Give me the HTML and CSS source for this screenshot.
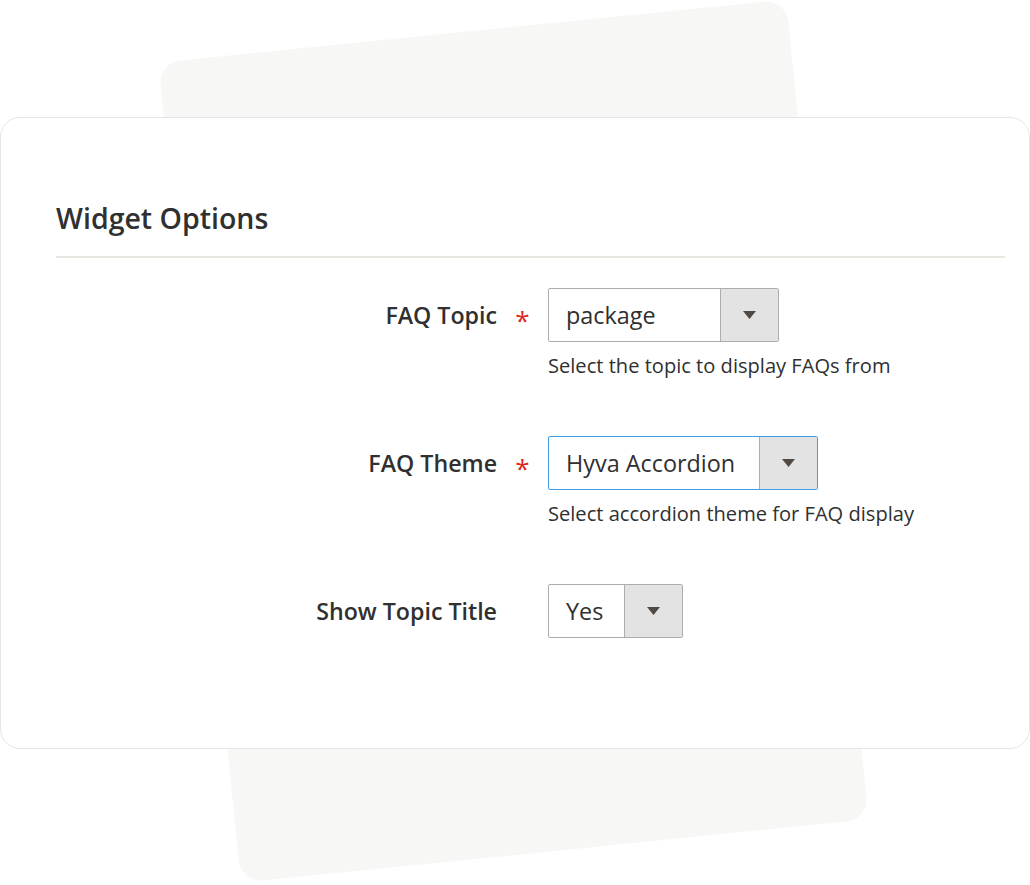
FILE: index.html
```html
<!DOCTYPE html>
<html lang="en">
<head>
    <meta charset="UTF-8">
    <meta name="viewport" content="width=device-width, initial-scale=1.0">
    <title>Widget Options</title>
    <link rel="stylesheet" href="styles.css">
</head>
<body>
    <div class="stage">
        <!-- tilted sheet behind the panel -->
        <div class="backdrop"></div>

        <section class="panel">
            <h2 class="panel-title">Widget Options</h2>

            <div class="field">
                <label class="field-label">FAQ Topic</label>
                <span class="field-mark">*</span>
                <div class="field-control">
                    <div class="select select-topic">
                        <span class="select-value">package</span>
                        <span class="select-btn">
                            <svg width="13" height="8" viewBox="0 0 13 8"><polygon points="0,0 13,0 6.5,8" fill="#514943"/></svg>
                        </span>
                    </div>
                    <div class="field-note">Select the topic to display FAQs from</div>
                </div>
            </div>

            <div class="field">
                <label class="field-label">FAQ Theme</label>
                <span class="field-mark">*</span>
                <div class="field-control">
                    <div class="select select-theme focused">
                        <span class="select-value">Hyva Accordion</span>
                        <span class="select-btn">
                            <svg width="13" height="8" viewBox="0 0 13 8"><polygon points="0,0 13,0 6.5,8" fill="#514943"/></svg>
                        </span>
                    </div>
                    <div class="field-note">Select accordion theme for FAQ display</div>
                </div>
            </div>

            <div class="field">
                <label class="field-label">Show Topic Title</label>
                <span class="field-mark"></span>
                <div class="field-control">
                    <div class="select select-yesno">
                        <span class="select-value">Yes</span>
                        <span class="select-btn">
                            <svg width="13" height="8" viewBox="0 0 13 8"><polygon points="0,0 13,0 6.5,8" fill="#514943"/></svg>
                        </span>
                    </div>
                </div>
            </div>
        </section>
    </div>
</body>
</html>
```

FILE: styles.css
```css
body {
    margin: 0;
    background: #fff;
    font-family: "Open Sans", "Noto Sans", Arial, sans-serif;
    color: #303030;
}

.stage {
    position: relative;
    width: 1030px;
    height: 885px;
    padding-top: 117px;
    box-sizing: border-box;
    overflow: hidden;
}

.backdrop {
    position: absolute;
    left: 198px;
    top: 29px;
    width: 631px;
    height: 824px;
    background: #f7f7f5;
    border-radius: 22px;
    transform: rotate(-5.75deg);
}

.panel {
    position: relative;
    background: #fff;
    border: 1px solid #e6e6e6;
    border-radius: 20px;
    padding: 82px 24px 110px 55px;
}

.panel-title {
    margin: 0;
    font-size: 28.5px;
    line-height: 37px;
    font-weight: 600;
    padding-bottom: 19px;
    border-bottom: 2px solid #e9e6e0;
}

.field {
    display: grid;
    grid-template-columns: 441px 51px auto;
    margin-top: 57px;
}

.panel-title + .field {
    margin-top: 30px;
}

.field-label {
    text-align: right;
    font-size: 23.2px;
    font-weight: 600;
    line-height: 54px;
}

.field-mark {
    text-align: center;
    color: #e22626;
    font-size: 26px;
    line-height: 1;
    font-weight: 500;
    padding-top: 19px;
}

.select {
    display: flex;
    height: 54px;
    box-sizing: border-box;
    border: 1px solid #adadad;
    border-radius: 2px;
    background: #fff;
}

.select.focused {
    border-color: #3f9de6;
}

.select-topic { width: 231px; }
.select-theme { width: 270px; }
.select-yesno { width: 135px; }

.select-value {
    flex: 1;
    padding-left: 17px;
    font-size: 23.4px;
    line-height: 52px;
}

.select-btn {
    width: 57px;
    display: flex;
    align-items: center;
    justify-content: center;
    background: #e3e3e3;
    border-left: 1px solid #adadad;
}

.field-note {
    margin-top: 11px;
    font-size: 20.1px;
    line-height: 26px;
}
```
